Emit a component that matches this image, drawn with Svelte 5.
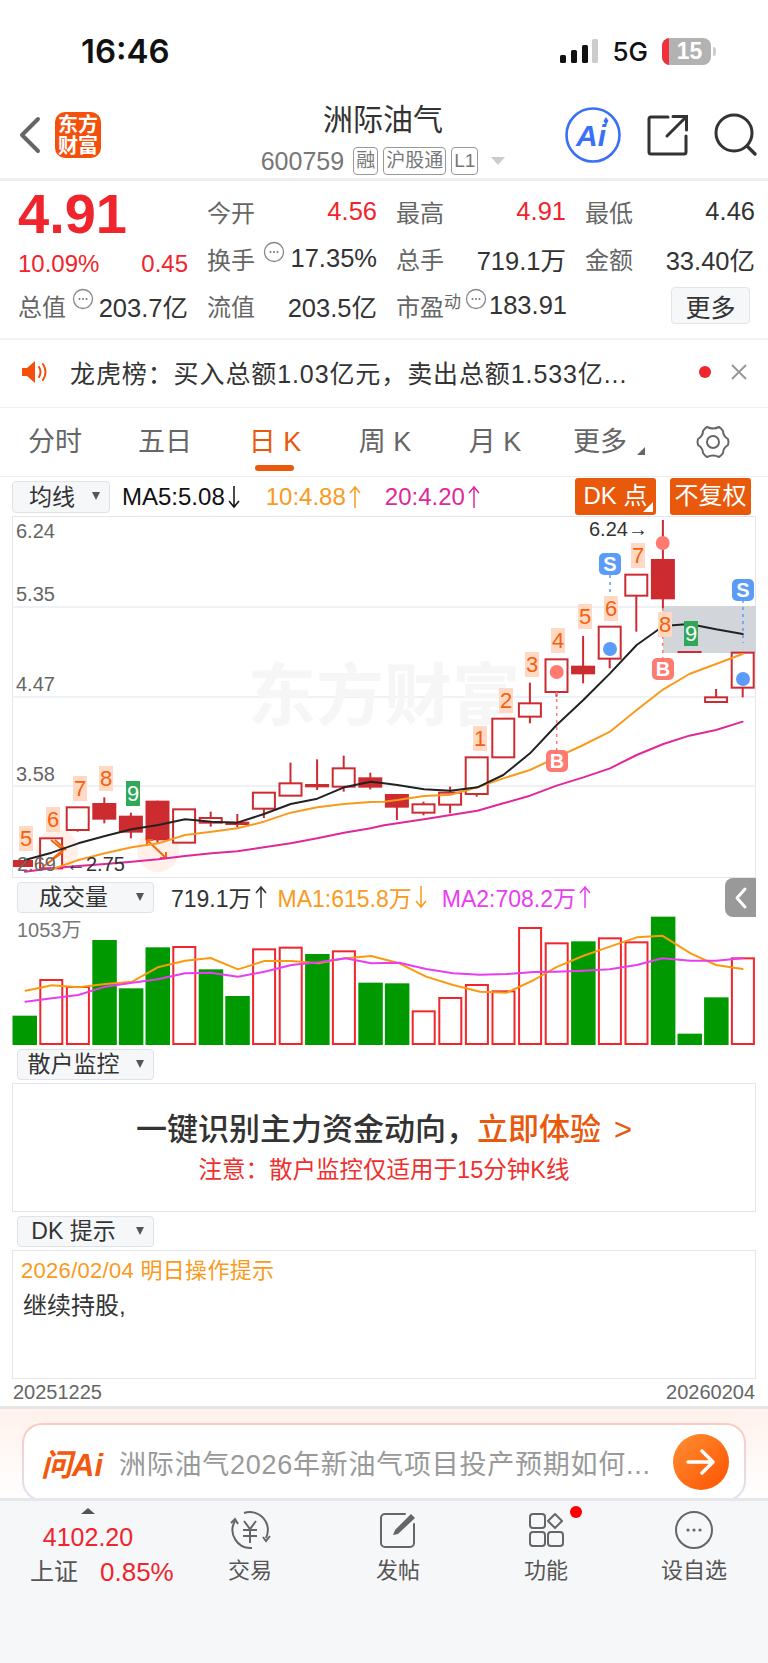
<script>
  // pixel positions measured from a 3x view of the chart
  const top = (v) => 510 + v / 3
  const left = (v) => 384 + v / 3
  const cx = (i) => 24.5 + i * 26.6

  // body top, body bottom, wick top, wick bottom, filled
  const candles = [
    null,
    [985, 1075, 985, 1075, 0],
    [892, 960, 892, 965, 0],
    [882, 926, 862, 940, 1],
    [920, 965, 908, 985, 1],
    [875, 988, 872, 998, 1],
    [898, 998, 898, 998, 0],
    [924, 938, 905, 950, 0],
    [938, 942, 912, 952, 0],
    [848, 896, 848, 924, 0],
    [820, 857, 758, 857, 0],
    [825, 829, 748, 840, 0],
    [775, 830, 737, 845, 0],
    [805, 830, 788, 838, 1],
    [855, 890, 855, 930, 1],
    [883, 908, 875, 916, 0],
    [848, 884, 830, 910, 0],
    [742, 852, 742, 860, 0],
    [626, 742, 626, 742, 0],
    [580, 620, 518, 640, 0],
    [448, 546, 448, 560, 0],
    [470, 490, 378, 520, 1],
    [350, 446, 350, 475, 0],
    [194, 257, 194, 365, 0],
    [150, 265, 30, 295, 1],
    [426, 428, 426, 428, 2],
    [562, 576, 537, 576, 0],
    [428, 533, 428, 562, 0],
  ]

  const line = (pts) => pts.map(([x, y]) => `${x},${y}`).join(' ')
  const ma = (a, b) => line([
    ...a.map(([x, y]) => [x / 3, top(y)]),
    ...b.map(([x, y]) => [left(x), top(y)]),
  ])

  const ma5 = ma(
    [[75, 1050], [155, 1028], [235, 1000], [315, 978], [395, 958], [475, 945], [555, 928], [635, 935], [712, 938], [792, 912], [872, 882], [952, 866], [1032, 832], [1112, 815]],
    [[0, 820], [40, 825], [120, 838], [200, 842], [280, 832], [358, 795], [438, 730], [518, 645], [598, 570], [678, 490], [758, 405], [838, 348], [916, 342], [996, 358], [1076, 372]],
  )
  const ma10 = ma(
    [[155, 1078], [235, 1050], [315, 1030], [395, 1012], [475, 1000], [555, 975], [635, 965], [712, 955], [792, 935], [872, 908], [952, 892], [1032, 882], [1112, 876]],
    [[0, 875], [40, 870], [120, 858], [200, 854], [280, 832], [358, 805], [438, 780], [518, 742], [598, 705], [678, 665], [758, 600], [838, 538], [916, 492], [996, 462], [1076, 432]],
  )
  const ma20 = ma(
    [[75, 1085], [155, 1075], [235, 1068], [315, 1062], [395, 1055], [475, 1048], [555, 1038], [635, 1030], [712, 1024], [792, 1012], [872, 1000], [952, 985], [1032, 968], [1112, 955]],
    [[0, 946], [40, 940], [120, 928], [200, 915], [280, 902], [358, 880], [438, 857], [518, 827], [598, 802], [678, 775], [758, 735], [838, 702], [916, 677], [996, 660], [1076, 635]],
  )

  const counts = [
    { t: '5', x: 19, y: 826 }, { t: '6', x: 46, y: 807 }, { t: '7', x: 73, y: 776 }, { t: '8', x: 99, y: 766 },
    { t: '9', x: 126, y: 781, down: true },
    { t: '1', x: 473, y: 726 }, { t: '2', x: 499, y: 688 }, { t: '3', x: 525, y: 652 }, { t: '4', x: 551, y: 628 },
    { t: '5', x: 578, y: 604 }, { t: '6', x: 604, y: 596 }, { t: '7', x: 631, y: 543 }, { t: '8', x: 658, y: 612 },
    { t: '9', x: 684, y: 621, down: true },
  ]

  // volume bars: top of bar, 1 = green
  const vols = [
    [437, 1], [327, 0], [348, 0], [210, 1], [355, 1], [232, 1], [228, 0], [298, 1], [378, 1], [235, 0],
    [230, 0], [252, 1], [241, 0], [338, 1], [340, 1], [421, 0], [381, 0], [342, 0], [361, 0], [171, 0],
    [217, 0], [214, 1], [202, 0], [214, 0], [140, 1], [491, 1], [382, 1], [262, 0],
  ]
  const vy = (v) => 870 + v / 3
  const vline = (pts) => line(pts.map(([x, y]) => [x / 2.0417, vy(y)]))
  const ma1 = vline([[52, 362], [106, 346], [160, 352], [215, 342], [270, 335], [322, 292], [378, 272], [430, 264], [486, 298], [540, 273], [595, 273], [650, 280], [705, 265], [758, 258], [815, 280], [870, 320], [925, 345], [980, 365], [1035, 368], [1090, 330], [1135, 292], [1190, 258], [1245, 230], [1300, 202], [1352, 197], [1410, 250], [1462, 285], [1516, 297]])
  const ma2 = vline([[52, 395], [106, 385], [160, 375], [215, 350], [270, 338], [322, 328], [378, 310], [430, 308], [486, 320], [540, 305], [595, 285], [650, 277], [705, 265], [758, 280], [815, 278], [870, 297], [925, 310], [980, 314], [1035, 312], [1090, 306], [1135, 305], [1190, 302], [1245, 298], [1300, 285], [1352, 265], [1410, 272], [1462, 272], [1516, 265]])

  const tabs = ['分时', '五日', '日 K', '周 K', '月 K', '更多']
</script>

{#snippet dots()}
  <svg class="dots" width="22" height="22" viewBox="0 0 22 22">
    <circle cx="11" cy="11" r="9.5" fill="none" stroke="#888" stroke-width="1.3" />
    <circle cx="7.5" cy="11" r="1" fill="#777" /><circle cx="11" cy="11" r="1" fill="#777" /><circle cx="14.5" cy="11" r="1" fill="#777" />
  </svg>
{/snippet}

{#snippet arrow(up)}
  <svg class="arrow" width="14" height="24" viewBox="0 0 14 24">
    {#if up}
      <path d="M7 23 V2 M2 8 L7 2 L12 8" fill="none" stroke="currentColor" stroke-width="1.5" />
    {:else}
      <path d="M7 1 V22 M2 16 L7 22 L12 16" fill="none" stroke="currentColor" stroke-width="1.5" />
    {/if}
  </svg>
{/snippet}

<div class="page">
  <div class="status">
    <span class="time">16:46</span>
    <svg class="signal" width="38" height="26" viewBox="0 0 38 26">
      <rect x="0" y="17" width="6" height="8" rx="1.5" fill="#111" />
      <rect x="11" y="12" width="6" height="13" rx="1.5" fill="#111" />
      <rect x="22" y="7" width="6" height="18" rx="1.5" fill="#111" />
      <rect x="32" y="1" width="6" height="24" rx="1.5" fill="#ccc" />
    </svg>
    <span class="net">5G</span>
    <span class="battery"><i></i>15</span>
    <span class="tip"></span>
  </div>

  <div class="head">
    <svg class="back" width="24" height="40" viewBox="0 0 24 40">
      <path d="M20 4 L4 20 L20 36" fill="none" stroke="#666" stroke-width="4" stroke-linecap="round" stroke-linejoin="round" />
    </svg>
    <div class="logo">东方<br />财富</div>
    <div class="name">
      <div class="title">洲际油气</div>
      <div class="code">
        <span class="num">600759</span>
        <span class="tag">融</span><span class="tag">沪股通</span><span class="tag">L1</span>
        <span class="caret"></span>
      </div>
    </div>
    <div class="actions">
      <svg width="58" height="58" viewBox="0 0 58 58">
        <circle cx="29" cy="29" r="26.5" fill="none" stroke="#3a70f5" stroke-width="2.6" />
        <text x="27" y="40" class="ai">Ai</text>
        <path d="M42 11 L44.5 15 L42 19 L39.5 15 Z" fill="#3a70f5" />
      </svg>
      <svg width="42" height="42" viewBox="0 0 42 42">
        <path d="M21 3 H4 a2 2 0 0 0 -2 2 V38 a2 2 0 0 0 2 2 H37 a2 2 0 0 0 2 -2 V22" fill="none" stroke="#333" stroke-width="3" stroke-linecap="round" />
        <path d="M20 22 L39 3 M26 2.5 H39.5 V16" fill="none" stroke="#333" stroke-width="3" stroke-linecap="round" />
      </svg>
      <svg width="44" height="44" viewBox="0 0 44 44">
        <circle cx="20" cy="20" r="18" fill="none" stroke="#333" stroke-width="3" />
        <path d="M33 33 L41 41" stroke="#333" stroke-width="3.4" stroke-linecap="round" />
      </svg>
    </div>
  </div>

  <div class="quote">
    <div class="price">4.91</div>
    <div class="cell"><span>今开</span><b class="up">4.56</b></div>
    <div class="cell"><span>最高</span><b class="up">4.91</b></div>
    <div class="cell"><span>最低</span><b>4.46</b></div>

    <div class="cell up change"><span>10.09%</span><span>0.45</span></div>
    <div class="cell"><span>换手</span>{@render dots()}<b>17.35%</b></div>
    <div class="cell"><span>总手</span><b>719.1万</b></div>
    <div class="cell"><span>金额</span><b>33.40亿</b></div>

    <div class="cell"><span>总值</span>{@render dots()}<b>203.7亿</b></div>
    <div class="cell"><span>流值</span><b>203.5亿</b></div>
    <div class="cell"><span class="nw">市盈<sup>动</sup></span>{@render dots()}<b>183.91</b></div>
    <div class="cell end"><button class="more">更多</button></div>
  </div>

  <div class="notice">
    <svg width="28" height="24" viewBox="0 0 28 24">
      <path d="M1 8 H6 L14 1 V23 L6 16 H1 Z" fill="#f4500b" />
      <path d="M18 7 Q21 12 18 17 M22 4 Q27 12 22 20" fill="none" stroke="#f4500b" stroke-width="2" stroke-linecap="round" />
    </svg>
    <span class="msg">龙虎榜：买入总额1.03亿元，卖出总额1.533亿...</span>
    <span class="dot"></span>
    <svg width="16" height="16" viewBox="0 0 16 16"><path d="M1 1 L15 15 M15 1 L1 15" stroke="#999" stroke-width="2" /></svg>
  </div>

  <div class="tabs">
    {#each tabs as tab, i}
      <div class="tab" class:active={i === 2} class:last={i === 5}>{tab}{#if i === 5}<i class="corner"></i>{/if}</div>
    {/each}
    <svg class="gear" width="36" height="34" viewBox="0 0 36 34">
      <path d="M12 2 Q18 5 24 2 Q26 3 28 6 Q28 11 33 14 Q34 17 33 20 Q28 23 28 28 Q26 31 24 32 Q18 29 12 32 Q10 31 8 28 Q8 23 3 20 Q2 17 3 14 Q8 11 8 6 Q10 3 12 2 Z" fill="none" stroke="#666" stroke-width="2" stroke-linejoin="round" />
      <circle cx="18" cy="17" r="6" fill="none" stroke="#666" stroke-width="2" />
    </svg>
  </div>

  <div class="tools top">
    <div class="select first">均线<i></i></div>
    <span class="ma black">MA5:5.08{@render arrow(false)}</span>
    <span class="ma orange">10:4.88{@render arrow(true)}</span>
    <span class="ma pink">20:4.20{@render arrow(true)}</span>
    <div class="btn dk">DK 点<i></i></div>
    <div class="btn">不复权</div>
  </div>

  <svg class="chart" width="744" height="362" viewBox="12 516 744 362">
    <rect x="12.5" y="516.5" width="743" height="361" fill="#fff" stroke="#e4e6eb" />
    <line x1="12" x2="756" y1="607" y2="607" class="grid" />
    <line x1="12" x2="756" y1="697" y2="697" class="grid" />
    <line x1="12" x2="756" y1="786" y2="786" class="grid" />
    <text x="384" y="720" class="mark" text-anchor="middle">东方财富</text>
    <text x="16" y="538" class="axis">6.24</text>
    <text x="16" y="601" class="axis">5.35</text>
    <text x="16" y="691" class="axis">4.47</text>
    <text x="16" y="781" class="axis">3.58</text>

    <rect x="663" y="606" width="93" height="47" fill="#d2d5da" />
    <circle cx="57" cy="850" r="21" fill="#fff1ea" />
    <circle cx="158" cy="851" r="21" fill="#fff1ea" />

    <rect x="13" y="860" width="20" height="7" fill="#cc2b30" />
    {#each candles as c, i}
      {#if c}
        {@const fill = c[4] === 1}
        <line x1={cx(i)} x2={cx(i)} y1={top(c[2])} y2={top(c[3])} stroke="#cc2b30" stroke-width="2" />
        {#if c[4] === 2}
          <line x1={cx(i) - 12} x2={cx(i) + 12} y1={top(c[0])} y2={top(c[0])} stroke="#cc2b30" stroke-width="2" />
        {:else}
          <rect x={cx(i) - 11} y={top(c[0])} width="22" height={top(c[1]) - top(c[0])} fill={fill ? '#cc2b30' : '#fff'} stroke="#cc2b30" stroke-width="2" />
        {/if}
      {/if}
    {/each}

    <path d="M51 840 L63 850 L51 860 M55 840 L66 850 M44 866 L63 852" fill="none" stroke="#f4660f" stroke-width="2" />
    <path d="M147 840 L166 858 M147 840 V846 M147 840 H153 M166 858 V852 M166 858 H160" fill="none" stroke="#f4660f" stroke-width="2" />

    <polyline points={ma20} class="ml" stroke="#e0289a" />
    <polyline points={ma10} class="ml" stroke="#f99a1c" />
    <polyline points={ma5} class="ml" stroke="#222" />

    <text x="17" y="871" class="axis">2.69</text>
    <text x="66" y="871" class="tagv">←2.75</text>
    <text x="589" y="536" class="tagv">6.24→</text>

    <line x1="610" x2="610" y1="575" y2="617" class="dash blue" />
    <line x1="743" x2="743" y1="600" y2="643" class="dash blue" />
    <line x1="556.7" x2="556.7" y1="692" y2="750" class="dash red" />
    <line x1="662.7" x2="662.7" y1="608" y2="658" class="dash red" />

    {#each counts as n}
      <rect x={n.x} y={n.y} width="14" height="25" fill={n.down ? '#2fa85a' : '#ffd9c4'} />
      <text x={n.x + 7} y={n.y + 20} class="count" fill={n.down ? '#fff' : '#f4600c'} text-anchor="middle">{n.t}</text>
    {/each}

    <circle cx="662.7" cy="543" r="7" fill="#ff7a70" />
    <circle cx="556.7" cy="672" r="7" fill="#ff7a70" />
    <circle cx="610" cy="649" r="7" fill="#5b9cf8" />
    <circle cx="743" cy="679" r="7" fill="#5b9cf8" />

    <rect x="599" y="553" width="22" height="22" rx="5" fill="#5b9cf8" />
    <text x="610" y="571" class="sb" text-anchor="middle">S</text>
    <rect x="732" y="579" width="22" height="22" rx="5" fill="#5b9cf8" />
    <text x="743" y="597" class="sb" text-anchor="middle">S</text>
    <rect x="546" y="750" width="22" height="22" rx="5" fill="#ff7a70" />
    <text x="557" y="768" class="sb" text-anchor="middle">B</text>
    <rect x="652" y="658" width="22" height="22" rx="5" fill="#ff7a70" />
    <text x="663" y="676" class="sb" text-anchor="middle">B</text>
  </svg>

  <div class="tools vol">
    <div class="select">成交量<i></i></div>
    <span class="ma dark">719.1万{@render arrow(true)}</span>
    <span class="ma orange">MA1:615.8万{@render arrow(false)}</span>
    <span class="ma violet">MA2:708.2万{@render arrow(true)}</span>
    <div class="handle">
      <svg width="14" height="24" viewBox="0 0 14 24"><path d="M11 3 L3 12 L11 21" fill="none" stroke="#fff" stroke-width="3" stroke-linecap="round" stroke-linejoin="round" /></svg>
    </div>
  </div>

  <svg class="volume" width="744" height="129" viewBox="12 916 744 129">
    {#each vols as v, i}
      {#if v[1]}
        <rect x={cx(i) - 12} y={vy(v[0])} width="24.5" height={1045 - vy(v[0])} fill="#009a00" />
      {:else}
        <rect x={cx(i) - 10.8} y={vy(v[0]) + 1} width="22" height={1043 - vy(v[0])} fill="#fff" stroke="#f0262c" stroke-width="2" />
      {/if}
    {/each}
    <polyline points={ma1} class="ml" stroke="#fb9a0e" />
    <polyline points={ma2} class="ml" stroke="#e83df0" />
    <text x="17" y="937" class="axis vaxis">1053万</text>
  </svg>

  <div class="tools sub"><div class="select">散户监控<i></i></div></div>
  <div class="panel promo">
    <div class="big">一键识别主力资金动向，<span>立即体验<em>&gt;</em></span></div>
    <div class="warn">注意：散户监控仅适用于15分钟K线</div>
  </div>

  <div class="tools sub"><div class="select">DK 提示<i></i></div></div>
  <div class="panel tips">
    <div class="tipdate">2026/02/04 明日操作提示</div>
    <div class="tiptext">继续持股,</div>
  </div>

  <div class="dates"><span>20251225</span><span>20260204</span></div>

  <div class="askbar">
    <div class="ask">
      <span class="asklogo">问Ai</span>
      <span class="asktext">洲际油气2026年新油气项目投产预期如何...</span>
      <span class="go">
        <svg width="30" height="26" viewBox="0 0 30 26"><path d="M2 13 H27 M16 2 L27 13 L16 24" fill="none" stroke="#fff" stroke-width="3.4" stroke-linecap="round" stroke-linejoin="round" /></svg>
      </span>
    </div>
  </div>

  <div class="nav">
    <div class="index">
      <i class="uptri"></i>
      <div class="up idx">4102.20</div>
      <div class="idxrow"><span>上证</span><span class="up">0.85%</span></div>
    </div>
    <div class="item">
      <svg width="44" height="40" viewBox="0 0 44 40">
        <path d="M7 11 A18 18 0 0 0 24 38 M16 3 A18 18 0 0 1 38 28" fill="none" stroke="#666" stroke-width="2" />
        <path d="M3 13 L7 9 L10 14 M35 27 L38 31 L42 26" fill="none" stroke="#666" stroke-width="2" />
        <path d="M16 11 L22 19 L28 11 M15 20 H29 M15 26 H29 M22 19 V33" fill="none" stroke="#666" stroke-width="2" />
      </svg>
      <span>交易</span>
    </div>
    <div class="item">
      <svg width="40" height="40" viewBox="0 0 40 40">
        <path d="M27 4 H7 a4 4 0 0 0 -4 4 V33 a4 4 0 0 0 4 4 H32 a4 4 0 0 0 4 -4 V14" fill="none" stroke="#666" stroke-width="2" stroke-linecap="round" />
        <path d="M15 25 L17 20 L33 4 L37 8 L20 24 Z" fill="#666" />
      </svg>
      <span>发帖</span>
    </div>
    <div class="item">
      <svg width="40" height="40" viewBox="0 0 40 40">
        <rect x="4" y="4" width="15" height="14" rx="3" fill="none" stroke="#666" stroke-width="2" />
        <rect x="4" y="22" width="15" height="14" rx="3" fill="none" stroke="#666" stroke-width="2" />
        <rect x="22" y="22" width="15" height="14" rx="3" fill="none" stroke="#666" stroke-width="2" />
        <path d="M29 4 L36 11 L29 18 L22 11 Z" fill="none" stroke="#666" stroke-width="2" stroke-linejoin="round" />
      </svg>
      <i class="badge"></i>
      <span>功能</span>
    </div>
    <div class="item">
      <svg width="40" height="40" viewBox="0 0 40 40">
        <circle cx="20" cy="20" r="18" fill="none" stroke="#666" stroke-width="2" />
        <circle cx="14" cy="20" r="1.6" fill="#666" /><circle cx="20" cy="20" r="1.6" fill="#666" /><circle cx="26" cy="20" r="1.6" fill="#666" />
      </svg>
      <span>设自选</span>
    </div>
  </div>
</div>

<style>
  :global(body) {
    margin: 0;
    background: #fff;
  }
  .page {
    width: 768px;
    height: 1663px;
    overflow: hidden;
    display: flex;
    flex-direction: column;
    font-family: 'Liberation Sans', 'Noto Sans CJK SC', sans-serif;
    color: #333;
  }
  .up {
    color: #f0242c;
  }

  .status {
    height: 90px;
    flex: none;
    display: flex;
    align-items: center;
    padding: 12px 52px 0 81px;
    box-sizing: border-box;
  }
  .time {
    font-family: Inter, sans-serif;
    font-weight: 600;
    font-size: 33px;
    color: #111;
    margin-right: auto;
  }
  .net {
    font-family: Inter, sans-serif;
    font-weight: 500;
    font-size: 26px;
    color: #111;
    margin: 0 14px 0 14px;
  }
  .battery {
    position: relative;
    width: 49px;
    height: 27px;
    border-radius: 8px;
    background: #b2b2b2;
    overflow: hidden;
    color: #fff;
    font: 700 23px 'Liberation Sans', sans-serif;
    line-height: 27px;
    text-align: center;
    text-indent: 6px;
  }
  .battery i {
    position: absolute;
    left: 0;
    top: 0;
    width: 7px;
    height: 27px;
    background: #f0303a;
  }
  .tip {
    width: 3px;
    height: 9px;
    margin-left: 2px;
    background: #ccc;
    border-radius: 0 3px 3px 0;
  }

  .head {
    height: 88px;
    flex: none;
    border-bottom: 3px solid #eee;
    display: flex;
    align-items: center;
    position: relative;
    padding-left: 18px;
  }
  .back {
    margin-top: 2px;
    flex: none;
  }
  .logo {
    width: 46px;
    height: 46px;
    flex: none;
    margin: 2px 0 0 13px;
    border-radius: 10px;
    background: #f4500b;
    color: #fff;
    font-size: 20px;
    font-weight: 700;
    line-height: 21px;
    padding-top: 2px;
    box-sizing: border-box;
    text-align: center;
    display: flex;
    align-items: center;
    justify-content: center;
  }
  .name {
    width: 564px;
    flex: none;
    display: flex;
    flex-direction: column;
    align-items: center;
    margin-top: 8px;
  }
  .title {
    font-size: 30px;
    line-height: 40px;
    color: #333;
  }
  .code {
    display: flex;
    align-items: center;
    gap: 5px;
    height: 30px;
    margin-top: 6px;
  }
  .num {
    font-size: 25px;
    color: #777;
    margin-right: 4px;
  }
  .tag {
    border: 1px solid #999;
    border-radius: 4px;
    font-size: 19px;
    line-height: 26px;
    padding: 0 2px;
    color: #777;
  }
  .caret {
    width: 0;
    height: 0;
    margin-left: 8px;
    border: 7px solid transparent;
    border-top: 8px solid #ccc;
    border-bottom: 0;
  }
  .actions {
    position: absolute;
    left: 564px;
    top: 16px;
    width: 205px;
    display: flex;
    align-items: center;
    gap: 25px;
  }
  .ai {
    font: italic 700 30px 'Liberation Sans', sans-serif;
    fill: #3a70f5;
    text-anchor: middle;
  }

  .quote {
    height: 159px;
    flex: none;
    box-sizing: border-box;
    padding: 7px 13px 0 18px;
    border-bottom: 2px solid #f1f1f1;
    display: grid;
    grid-template-columns: repeat(4, 170px);
    grid-auto-rows: 47px;
    column-gap: 19px;
  }
  .price {
    font-size: 56px;
    font-weight: 700;
    color: #f0242c;
    line-height: 54px;
    margin-top: -1px;
  }
  .cell {
    display: flex;
    align-items: center;
    justify-content: space-between;
    font-size: 24px;
    color: #666;
    margin-top: -1px;
  }
  .cell b {
    font-weight: 400;
    font-size: 25.5px;
    color: #333;
    white-space: nowrap;
  }
  .cell b.up {
    color: #f0242c;
  }
  .change {
    color: #f0242c;
    padding-top: 12px;
  }
  .nw {
    white-space: nowrap;
  }
  .cell sup {
    font-size: 17px;
    line-height: 0;
    vertical-align: 8px;
  }
  .dots {
    flex: none;
    margin: -12px 2px 0 4px;
  }
  .end {
    justify-content: flex-end;
    padding-right: 5px;
  }
  .more {
    width: 79px;
    height: 37px;
    padding: 0;
    font: inherit;
    font-size: 25px;
    color: #333;
    background: #f6f7f9;
    border: 1px solid #e2e4e9;
    border-radius: 4px;
  }

  .notice {
    height: 68px;
    flex: none;
    box-sizing: border-box;
    border-bottom: 1px solid #f1f1f1;
    display: flex;
    align-items: center;
    padding: 0 21px 4px;
    gap: 20px;
  }
  .msg {
    font-size: 25px;
    letter-spacing: 0.9px;
    color: #333;
    flex: 1;
    white-space: nowrap;
    margin-left: 1px;
  }
  .dot {
    width: 12px;
    height: 12px;
    border-radius: 50%;
    background: #f0242c;
  }

  .tabs {
    height: 69px;
    flex: none;
    box-sizing: border-box;
    position: relative;
    display: grid;
    grid-template-columns: repeat(6, 110px);
    border-bottom: 1px solid #eee;
  }
  .tab {
    position: relative;
    text-align: center;
    font-size: 27px;
    line-height: 69px;
    height: 68px;
    color: #666;
  }
  .tab.active {
    color: #e8590c;
  }
  .tab.active::after {
    content: '';
    position: absolute;
    left: 35px;
    top: 57px;
    width: 39px;
    height: 6px;
    border-radius: 3px;
    background: #e8590c;
  }
  .tab.last {
    padding-right: 10px;
  }
  .corner {
    position: absolute;
    left: 87px;
    top: 39px;
    width: 0;
    height: 0;
    border-left: 8px solid transparent;
    border-bottom: 8px solid #666;
  }
  .gear {
    position: absolute;
    left: 695px;
    top: 17px;
  }

  .tools {
    height: 38px;
    flex: none;
    display: flex;
    align-items: center;
    position: relative;
    padding-left: 12px;
    box-sizing: border-box;
  }
  .tools.top {
    height: 39px;
  }
  .select {
    position: relative;
    width: 137px;
    height: 31px;
    box-sizing: border-box;
    border: 1px solid #dfe2e8;
    border-radius: 4px;
    background: #f6f7f9;
    font-size: 23px;
    line-height: 29px;
    padding-right: 24px;
    text-align: center;
    color: #333;
  }
  .select i {
    position: absolute;
    right: 9px;
    top: 10px;
    width: 0;
    height: 0;
    border: 4.5px solid transparent;
    border-top: 8px solid #555;
    border-bottom: 0;
  }
  .select.first {
    width: 98px;
    height: 32px;
    margin-right: 12px;
    line-height: 30px;
    padding-right: 18px;
  }
  .ma {
    display: inline-flex;
    align-items: center;
    gap: 2px;
    font-size: 24px;
    white-space: nowrap;
    margin-right: 21px;
  }
  .top .black {
    margin-right: 25px;
  }
  .top .orange {
    margin-right: 23px;
  }
  .arrow {
    flex: none;
  }
  .black {
    color: #111;
  }
  .dark {
    color: #333;
  }
  .orange {
    color: #f99a1c;
  }
  .pink {
    color: #e0289a;
  }
  .violet {
    color: #e83df0;
  }
  .btn {
    position: relative;
    width: 81px;
    height: 37px;
    background: #e8590c;
    border-radius: 3px;
    color: #fff;
    font-size: 24px;
    line-height: 36px;
    text-align: center;
    margin-right: 14px;
    margin-top: -1px;
  }
  .btn + .btn {
    margin-right: 17px;
  }
  .dk {
    margin-left: auto;
  }
  .dk i {
    position: absolute;
    right: 3px;
    bottom: 3px;
    width: 0;
    height: 0;
    border-left: 10px solid transparent;
    border-bottom: 10px solid #fff;
  }

  .chart {
    flex: none;
    display: block;
    margin-left: 12px;
  }
  .grid {
    stroke: #e9ecf2;
    stroke-width: 1.6;
  }
  .mark {
    font-size: 68px;
    font-weight: 700;
    fill: #f6f6f6;
  }
  .axis {
    font-size: 20px;
    fill: #666;
  }
  .vaxis {
    fill: #777;
  }
  .tagv {
    font-size: 20px;
    fill: #333;
  }
  .ml {
    fill: none;
    stroke-width: 2;
    stroke-linejoin: round;
    stroke-linecap: round;
  }
  .count {
    font-size: 22px;
  }
  .sb {
    font-size: 20px;
    font-weight: 700;
    fill: #fff;
  }
  .dash {
    stroke-width: 1.5;
    stroke-dasharray: 3 4;
  }
  .dash.blue {
    stroke: #5b9cf8;
  }
  .dash.red {
    stroke: #ff7a70;
  }

  .vol {
    padding-left: 17px;
  }
  .vol .select {
    margin-right: 17px;
  }
  .vol .ma {
    font-size: 23px;
    margin-right: 12px;
  }
  .vol .dark {
    margin-right: 10px;
  }
  .vol .orange {
    margin-right: 14px;
  }
  .handle {
    position: absolute;
    right: 12px;
    top: 0;
    width: 31px;
    height: 39px;
    background: #999;
    border-radius: 8px 0 0 8px;
    display: flex;
    align-items: center;
    justify-content: center;
  }

  .volume {
    flex: none;
    display: block;
    margin-left: 12px;
    background: #fff;
  }

  .sub {
    padding-left: 17px;
  }
  .panel {
    flex: none;
    height: 129px;
    margin: 0 12px;
    box-sizing: border-box;
    border: 1px solid #e4e6eb;
  }
  .promo {
    text-align: center;
    padding-top: 24px;
  }
  .big {
    font-size: 31px;
    line-height: 44px;
    font-weight: 500;
    color: #333;
    white-space: nowrap;
  }
  .big span {
    color: #e8590c;
  }
  .big em {
    font-style: normal;
    margin-left: 13px;
  }
  .warn {
    font-size: 23.5px;
    line-height: 36px;
    color: #f0302f;
  }
  .tips {
    padding: 3px 0 0 8px;
  }
  .tipdate {
    font-size: 22px;
    letter-spacing: 0.3px;
    line-height: 34px;
    color: #f99a1c;
  }
  .tiptext {
    font-size: 24px;
    line-height: 36px;
    color: #333;
    padding-left: 2px;
  }

  .dates {
    height: 27px;
    flex: none;
    display: flex;
    justify-content: space-between;
    padding: 0 13px;
    font-size: 20px;
    line-height: 27px;
    color: #666;
  }

  .askbar {
    height: 92px;
    flex: none;
    box-sizing: border-box;
    border-top: 3px solid #e6e6e6;
    background: linear-gradient(#fff1ec, #fff);
    padding: 14px 22px 0;
  }
  .ask {
    height: 78px;
    box-sizing: border-box;
    border-radius: 20px;
    background: linear-gradient(#fff, #fff) padding-box, linear-gradient(#ffc9bd, #dfe2f5) border-box;
    border: 2px solid transparent;
    display: flex;
    align-items: center;
    padding: 0 15px 0 17px;
  }
  .asklogo {
    font-size: 31px;
    font-style: italic;
    font-weight: 700;
    color: #f4580f;
    width: 78px;
    flex: none;
  }
  .asktext {
    flex: 1;
    font-size: 27px;
    letter-spacing: 0.75px;
    color: #999;
    white-space: nowrap;
    overflow: hidden;
  }
  .go {
    width: 56px;
    height: 56px;
    flex: none;
    border-radius: 50%;
    background: linear-gradient(135deg, #ff8f33, #ff5200);
    display: flex;
    align-items: center;
    justify-content: center;
  }

  .nav {
    flex: 1;
    box-sizing: border-box;
    border-top: 3px solid #e6e7eb;
    background: #f6f7f9;
    display: grid;
    grid-template-columns: 176px repeat(4, 148px);
    align-items: start;
  }
  .index {
    position: relative;
    text-align: center;
    padding-top: 20px;
  }
  .uptri {
    position: absolute;
    left: 81px;
    top: 7px;
    width: 0;
    height: 0;
    border: 7px solid transparent;
    border-bottom: 6px solid #555;
    border-top: 0;
  }
  .idx {
    font-size: 25px;
    line-height: 32px;
  }
  .idxrow {
    display: flex;
    gap: 22px;
    padding: 1px 0 0 30px;
    font-size: 26px;
    line-height: 36px;
    color: #555;
    white-space: nowrap;
  }
  .idxrow span:first-child {
    font-size: 24px;
  }
  .item {
    position: relative;
    display: flex;
    flex-direction: column;
    align-items: center;
    padding-top: 9px;
    font-size: 22px;
    color: #555;
    line-height: 30px;
    gap: 6px;
  }
  .item svg {
    display: block;
  }
  .badge {
    position: absolute;
    left: 98px;
    top: 5px;
    width: 12px;
    height: 12px;
    border-radius: 50%;
    background: #f00;
  }
</style>
